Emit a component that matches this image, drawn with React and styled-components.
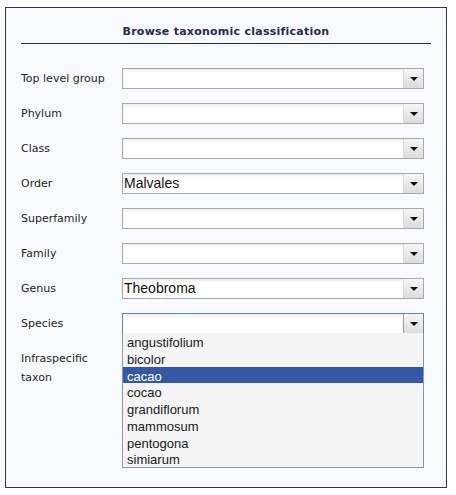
import React from "react";
import styled, { createGlobalStyle } from "styled-components";

const Global = createGlobalStyle`
  html, body { margin: 0; padding: 0; background: #ffffff; }
  body { font-family: "DejaVu Sans", Verdana, sans-serif; }
`;

const Panel = styled.div`
  box-sizing: border-box;
  margin: 7px 0 0 5px;
  width: 442px;
  height: 481px;
  border: 1px solid #34344e;
  background: #f7f9fd;
  padding: 0 15px;
`;

const Title = styled.h1`
  margin: 16px 0 0;
  padding: 0 0 3px;
  border-bottom: 1px solid #2b2b45;
  font-family: "DejaVu Sans", Verdana, sans-serif;
  font-size: 11px;
  font-weight: bold;
  line-height: 16px;
  text-align: center;
  color: #2a2a52;
  letter-spacing: 0.25px;
`;

const Form = styled.div`
  margin-top: 24px;
  display: grid;
  grid-template-columns: 101px 302px;
  row-gap: 14px;
`;

const Label = styled.div`
  font-size: 11px;
  line-height: ${(p) => (p.$multi ? "19px" : "21px")};
  color: #262626;
  width: ${(p) => (p.$multi ? "70px" : "auto")};
  margin-top: ${(p) => (p.$multi ? "1px" : "0")};
`;

const Field = styled.div`
  position: relative;
  box-sizing: border-box;
  height: 21px;
  display: flex;
  border: 1px solid ${(p) => (p.$open ? "#6f83ab" : "#a9a9a9")};
  background: #ffffff;
  box-shadow: inset 0 2px 3px rgba(0, 0, 0, 0.07);
`;

const Value = styled.div`
  flex: 1;
  font-family: "Liberation Sans", Arial, sans-serif;
  font-size: 14px;
  line-height: 19px;
  padding-left: 1px;
  color: #111;
  white-space: nowrap;
`;

const Button = styled.div`
  width: 19px;
  display: flex;
  align-items: center;
  justify-content: center;
  border-left: 1px solid ${(p) => (p.$open ? "#8b9bbd" : "#dcdcdc")};
  background: linear-gradient(#f6f6f6, #dcdcdc);
`;

const Arrow = styled.span`
  width: 0;
  height: 0;
  border-left: 4px solid transparent;
  border-right: 4px solid transparent;
  border-top: 4px solid #111;
  margin-top: 1px;
`;

const List = styled.ul`
  position: absolute;
  top: 100%;
  left: -1px;
  right: -1px;
  margin: 0;
  padding: 0;
  list-style: none;
  border: 1px solid #8797b9;
  border-top: none;
  background: #f4f4f4;
  z-index: 2;
`;

const Item = styled.li`
  height: 16.75px;
  line-height: 19px;
  padding-left: 4px;
  font-family: "Liberation Sans", Arial, sans-serif;
  font-size: 13px;
  color: ${(p) => (p.$selected ? "#ffffff" : "#1a1a1a")};
  background: ${(p) => (p.$selected ? "#3458a6" : "transparent")};
  overflow: visible;
`;

const rows = [
  { label: "Top level group" },
  { label: "Phylum" },
  { label: "Class" },
  { label: "Order", value: "Malvales" },
  { label: "Superfamily" },
  { label: "Family" },
  { label: "Genus", value: "Theobroma" },
  { label: "Species", open: true },
  { label: "Infraspecific taxon", multi: true },
];

const species = [
  "angustifolium",
  "bicolor",
  "cacao",
  "cocao",
  "grandiflorum",
  "mammosum",
  "pentogona",
  "simiarum",
];

export default function App() {
  return (
    <>
      <Global />
      <Panel>
        <Title>Browse taxonomic classification</Title>
        <Form>
          {rows.map((r) => (
            <React.Fragment key={r.label}>
              <Label $multi={r.multi}>{r.label}</Label>
              <Field $open={r.open}>
                <Value>{r.value || ""}</Value>
                <Button $open={r.open}>
                  <Arrow />
                </Button>
                {r.open && (
                  <List>
                    {species.map((s) => (
                      <Item key={s} $selected={s === "cacao"}>
                        {s}
                      </Item>
                    ))}
                  </List>
                )}
              </Field>
            </React.Fragment>
          ))}
        </Form>
      </Panel>
    </>
  );
}
